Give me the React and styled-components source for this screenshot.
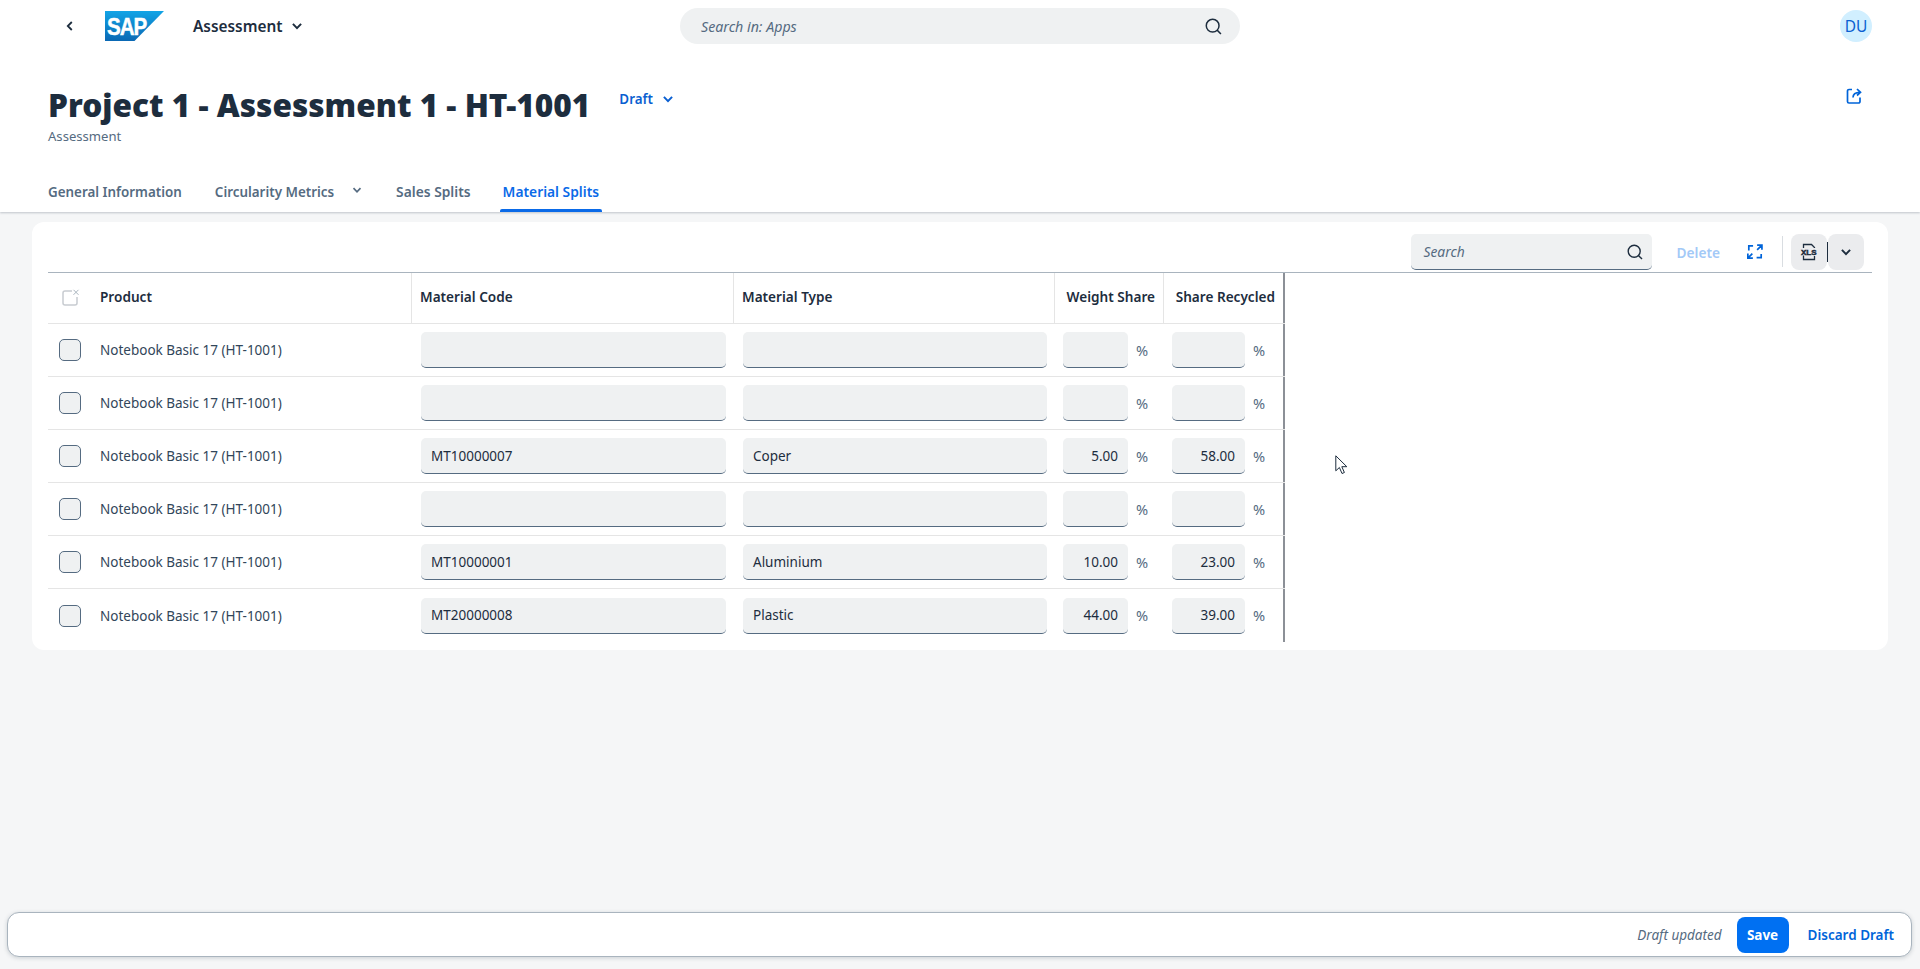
import React from "react";
import styled, { createGlobalStyle } from "styled-components";

const Global = createGlobalStyle`
  html, body { margin: 0; padding: 0; background: #f5f6f7; }
  body { font-family: "Noto Sans", "Open Sans", Arial, sans-serif; color: #1d2d3e; }
  * { box-sizing: border-box; }
`;

const Page = styled.div`
  position: relative;
  height: 969px;
  overflow: hidden;
  display: flex;
  flex-direction: column;
  background: #f5f6f7;
`;

const Header = styled.header`
  height: 212px;
  background: #fff;
  box-shadow: 0 1px 2px rgba(34, 53, 72, 0.25);
  display: flex;
  flex-direction: column;
  flex: none;
`;

const ShellBar = styled.div`
  height: 52px;
  display: grid;
  grid-template-columns: 1fr 560px 1fr;
  align-items: center;
  padding: 0 48px;
`;

const ShellLeft = styled.div`
  display: flex;
  align-items: center;
  padding-left: 16px;
`;

const ShellRight = styled.div`
  display: flex;
  justify-content: flex-end;
`;

const BackButton = styled.span`
  width: 41px;
  display: flex;
  color: #1d2d3e;
`;

const AppTitle = styled.span`
  margin-left: 29px;
  font-size: 15.4px;
  font-weight: 600;
  color: #1d2d3e;
`;

const AppChevron = styled.span`
  display: flex;
  margin-left: 7px;
`;

const ShellSearch = styled.div`
  height: 36px;
  border-radius: 18px;
  background: #eff1f2;
  display: flex;
  align-items: center;
  justify-content: space-between;
  padding: 0 18px 0 21px;
  font-size: 14.2px;
  font-style: italic;
  color: #556b81;
`;

const Avatar = styled.span`
  width: 32px;
  height: 32px;
  border-radius: 50%;
  background: #d1efff;
  color: #0a5fd1;
  font-size: 15.5px;
  display: flex;
  align-items: center;
  justify-content: center;
`;

const TitleArea = styled.div`
  height: 114px;
  padding: 31px 48px 0;
  display: flex;
  justify-content: space-between;
  align-items: flex-start;
`;

const TitleColumn = styled.div`
  display: flex;
  flex-direction: column;
`;

const TitleRow = styled.div`
  display: flex;
  align-items: flex-start;
`;

const Title = styled.h1`
  margin: 0;
  font-size: 31.6px;
  line-height: 44px;
  font-weight: 900;
  color: #1d2d3e;
  white-space: nowrap;
`;

const Status = styled.span`
  margin: 7px 0 0 29px;
  font-size: 13.4px;
  font-weight: 600;
  color: #0a5fd1;
  display: flex;
  align-items: center;
  gap: 8px;
`;

const Subtitle = styled.div`
  margin-top: 0;
  font-size: 13.1px;
  color: #556b81;
`;

const ShareButton = styled.span`
  margin-top: 5px;
  margin-right: 10px;
  display: flex;
`;

const Tabs = styled.nav`
  height: 46px;
  padding: 0 0 0 48px;
  display: flex;
  align-items: stretch;
`;

const Tab = styled.span`
  position: relative;
  display: flex;
  align-items: center;
  padding-top: 5px;
  margin-right: ${(p) => p.$gap}px;
  font-size: ${(p) => p.$size ?? 13.4}px;
  font-weight: 600;
  color: ${(p) => (p.$active ? "#0a6ae8" : "#556b81")};
  ${(p) =>
    p.$active &&
    `&::after { content: ""; position: absolute; left: -3px; right: -3px; bottom: 0; height: 3px; background: #0a6ae8; border-radius: 2px 2px 0 0; }`}
`;

const TabChevron = styled.span`
  display: flex;
  margin: -4px 0 0 17px;
`;

const Card = styled.section`
  margin: 10px 32px 0;
  height: 428px;
  background: #fff;
  border-radius: 12px;
  padding: 12px 16px 0;
  display: flex;
  flex-direction: column;
`;

const Toolbar = styled.div`
  height: 39px;
  display: flex;
  align-items: flex-start;
  justify-content: flex-end;
  padding-right: 8px;
  border-bottom: 1px solid #a9b4be;
`;

const TableSearch = styled.div`
  width: 241px;
  height: 36px;
  background: #eff1f2;
  border-radius: 5px;
  border-bottom: 1px solid #556b81;
  padding: 0 9px 0 13px;
  display: flex;
  align-items: center;
  justify-content: space-between;
  font-size: 13.8px;
  font-style: italic;
  color: #556b81;
`;

const DeleteLabel = styled.span`
  margin-left: 25px;
  height: 36px;
  display: flex;
  align-items: center;
  font-size: 13.7px;
  font-weight: 600;
  color: #a3c9f7;
`;

const ExpandIcon = styled.span`
  margin-left: 27px;
  height: 36px;
  display: flex;
  align-items: center;
`;

const Separator = styled.span`
  width: 1px;
  height: 31px;
  margin: 2px 8px 0 19px;
  background: #d9dde1;
`;

const ExportButton = styled.span`
  width: 36px;
  height: 36px;
  border-radius: 8px;
  background: #ebecee;
  display: flex;
  align-items: center;
  justify-content: center;
`;

const ExportDivider = styled.span`
  width: 1px;
  height: 20px;
  margin-top: 8px;
  background: #1d2d3e;
`;

const Grid = styled.div`
  display: grid;
  grid-template-columns: 44px 320px 322px 321px 109px 121px;
  width: 1237px;
  border-right: 2px solid #8c9097;
`;

const HeadCell = styled.div`
  height: 51px;
  display: flex;
  align-items: center;
  justify-content: ${(p) => (p.$end ? "flex-end" : "flex-start")};
  padding: ${(p) => (p.$end ? `0 ${p.$pr}px 4px 0` : "0 0 4px 8px")};
  font-size: 13.6px;
  font-weight: 600;
  color: #1d2d3e;
  white-space: nowrap;
  border-bottom: 1px solid #e5e5e5;
  border-right: ${(p) => (p.$last || p.$plain ? "none" : "1px solid #e5e5e5")};
`;

const SelectHead = styled(HeadCell)`
  padding: 0 0 2px 14px;
`;

const BodyCell = styled.div`
  height: 53px;
  display: flex;
  align-items: center;
  padding-left: ${(p) => p.$pad ?? 9}px;
  gap: 8px;
  font-size: 13.5px;
  color: #32465a;
  white-space: nowrap;
  border-bottom: ${(p) => (p.$lastRow ? "none" : "1px solid #e5e5e5")};
`;

const Check = styled.span`
  width: 22px;
  height: 22px;
  border-radius: 5px;
  border: 1px solid #556b81;
  background: #eff1f2;
`;

const Field = styled.span`
  width: ${(p) => p.$w}px;
  height: 36px;
  padding: 0 10px;
  background: #eff1f2;
  border-radius: 5px;
  border-bottom: 1px solid #556b81;
  display: flex;
  align-items: center;
  justify-content: ${(p) => (p.$right ? "flex-end" : "flex-start")};
  font-size: 13.5px;
  color: #1d2d3e;
`;

const Unit = styled.span`
  font-size: 14.6px;
  color: #556b81;
  margin-top: -1px;
`;

const FooterBar = styled.footer`
  position: absolute;
  left: 7px;
  right: 8px;
  top: 912px;
  height: 45px;
  background: #fff;
  border: 1px solid #a9b4be;
  border-radius: 12px;
  box-shadow: 0 1px 4px rgba(34, 53, 72, 0.2);
  display: flex;
  align-items: center;
  justify-content: flex-end;
  padding-right: 17px;
`;

const DraftNote = styled.span`
  font-size: 13.5px;
  font-style: italic;
  color: #556b81;
`;

const SaveButton = styled.span`
  margin-left: 15px;
  width: 52px;
  height: 36px;
  border-radius: 8px;
  background: #0070f2;
  color: #fff;
  font-size: 13.5px;
  font-weight: 700;
  display: flex;
  align-items: center;
  justify-content: center;
`;

const DiscardButton = styled.span`
  margin-left: 19px;
  font-size: 13.5px;
  font-weight: 600;
  color: #0064d9;
`;

const Pointer = styled.svg`
  position: absolute;
  left: 1335px;
  top: 455px;
`;

const Chevron = ({ size = 12, color = "#1d2d3e", sw = 1.7 }) => (
  <svg width={size} height={size} viewBox="0 0 12 12" fill="none" stroke={color} strokeWidth={sw}>
    <path d="M2.5 4.2 6 7.8l3.5-3.6" />
  </svg>
);

const SearchGlyph = ({ size = 16 }) => (
  <svg width={size} height={size} viewBox="0 0 16 16" fill="none" stroke="#1d2d3e" strokeWidth="1.4">
    <circle cx="7.2" cy="7.2" r="6" />
    <path d="M11.4 11.4 15 15" />
  </svg>
);

const SapLogo = () => (
  <svg width="59" height="30" viewBox="0 0 59 30">
    <defs>
      <linearGradient id="sapg" x1="0" y1="0" x2="0" y2="1">
        <stop offset="0" stopColor="#12a4e6" />
        <stop offset="1" stopColor="#0a68b4" />
      </linearGradient>
    </defs>
    <path d="M0 0h59L29.5 30H0z" fill="url(#sapg)" />
    <text
      transform="translate(2 24) scale(1.03 1.2)"
      fontFamily="Liberation Sans, Arial, sans-serif"
      fontWeight="700"
      fontSize="20"
      letterSpacing="-1"
      fill="#fff"
      stroke="#fff"
      strokeWidth="0.4"
    >
      SAP
    </text>
  </svg>
);

const ShareGlyph = () => (
  <svg width="16" height="16" viewBox="0 0 16 16" fill="none" stroke="#0064d9" strokeWidth="1.7">
    <path d="M6 1.5H3A1.5 1.5 0 0 0 1.500 3v10.500A1.500 1.500 0 0 0 3 15h9.500a1.500 1.500 0 0 0 1.500-1.500V9.500" />
    <path d="M7 9.500c0-3.200 2-5.200 7-5.200M11 1l3.500 3.300L11 7.500" />
  </svg>
);

const ExpandGlyph = () => (
  <svg width="16" height="16" viewBox="0 0 15 15" fill="none" stroke="#0064d9" strokeWidth="1.6">
    <path d="M1.700 6V1.700h4M9.500 1H14v4.500M14 1 9.500 5.500M.800 9v4.300H5.500M.800 13.300 5 9M13.300 9.300v3.400H9" />
  </svg>
);

const XlsGlyph = () => (
  <svg width="18" height="18" viewBox="0 0 18 18" fill="none" stroke="#1d2d3e" strokeWidth="1.3">
    <path d="M3.500 5V1.500h8l3 3V5M3.500 12.500v4h11v-3.500" />
    <text
      x="1"
      y="11.500"
      stroke="#1d2d3e"
      strokeWidth="0.5"
      fill="#1d2d3e"
      fontFamily="Liberation Sans, Arial, sans-serif"
      fontWeight="700"
      fontSize="8"
    >
      XLS
    </text>
  </svg>
);

const SelectAllGlyph = () => (
  <svg width="18" height="17" viewBox="0 0 18 17" fill="none" stroke="#c8ccd1" strokeWidth="1.500">
    <path d="M10 2H3a2 2 0 0 0-2 2v10a2 2 0 0 0 2 2h10a2 2 0 0 0 2-2V8" />
    <path d="M11.500.800l5 5M16.500.800l-5 5" stroke="#a9b4be" strokeWidth="1" />
  </svg>
);

const rows = [
  { code: "", type: "", weight: "", recycled: "" },
  { code: "", type: "", weight: "", recycled: "" },
  { code: "MT10000007", type: "Coper", weight: "5.00", recycled: "58.00" },
  { code: "", type: "", weight: "", recycled: "" },
  { code: "MT10000001", type: "Aluminium", weight: "10.00", recycled: "23.00" },
  { code: "MT20000008", type: "Plastic", weight: "44.00", recycled: "39.00" },
];

export default function App() {
  return (
    <Page>
      <Global />
      <Header>
        <ShellBar>
          <ShellLeft>
            <BackButton>
              <svg width="12" height="12" viewBox="0 0 12 12" fill="none" stroke="#1d2d3e" strokeWidth="1.800">
                <path d="M7.800 2 3.800 6l4 4" />
              </svg>
            </BackButton>
            <SapLogo />
            <AppTitle>Assessment</AppTitle>
            <AppChevron>
              <Chevron size={14} />
            </AppChevron>
          </ShellLeft>
          <ShellSearch>
            Search in: Apps
            <SearchGlyph size={17} />
          </ShellSearch>
          <ShellRight>
            <Avatar>DU</Avatar>
          </ShellRight>
        </ShellBar>
        <TitleArea>
          <TitleColumn>
            <TitleRow>
              <Title>Project 1 - Assessment 1 - HT-1001</Title>
              <Status>
                Draft
                <Chevron size={14} color="#0a5fd1" />
              </Status>
            </TitleRow>
            <Subtitle>Assessment</Subtitle>
          </TitleColumn>
          <ShareButton>
            <ShareGlyph />
          </ShareButton>
        </TitleArea>
        <Tabs>
          <Tab $gap={33}>General Information</Tab>
          <Tab $gap={33}>
            Circularity Metrics
            <TabChevron>
              <Chevron size={12} color="#556b81" />
            </TabChevron>
          </Tab>
          <Tab $gap={32} $size={13.8}>Sales Splits</Tab>
          <Tab $active $gap={0} $size={13.8}>Material Splits</Tab>
        </Tabs>
      </Header>

      <Card>
        <Toolbar>
          <TableSearch>
            Search
            <SearchGlyph size={16} />
          </TableSearch>
          <DeleteLabel>Delete</DeleteLabel>
          <ExpandIcon>
            <ExpandGlyph />
          </ExpandIcon>
          <Separator />
          <ExportButton>
            <XlsGlyph />
          </ExportButton>
          <ExportDivider />
          <ExportButton>
            <Chevron size={14} />
          </ExportButton>
        </Toolbar>
        <Grid>
          <SelectHead $plain>
            <SelectAllGlyph />
          </SelectHead>
          <HeadCell>Product</HeadCell>
          <HeadCell>Material Code</HeadCell>
          <HeadCell>Material Type</HeadCell>
          <HeadCell $end $pr={8}>Weight Share</HeadCell>
          <HeadCell $end $last $pr={10}>Share Recycled</HeadCell>
          {rows.map((r, i) => {
            const lastRow = i === rows.length - 1;
            return (
              <React.Fragment key={i}>
                <BodyCell $pad={11} $lastRow={lastRow}>
                  <Check />
                </BodyCell>
                <BodyCell $pad={8} $lastRow={lastRow}>Notebook Basic 17 (HT-1001)</BodyCell>
                <BodyCell $lastRow={lastRow}>
                  <Field $w={305}>{r.code}</Field>
                </BodyCell>
                <BodyCell $lastRow={lastRow}>
                  <Field $w={304}>{r.type}</Field>
                </BodyCell>
                <BodyCell $pad={8} $lastRow={lastRow}>
                  <Field $w={65} $right>{r.weight}</Field>
                  <Unit>%</Unit>
                </BodyCell>
                <BodyCell $pad={8} $lastRow={lastRow}>
                  <Field $w={73} $right>{r.recycled}</Field>
                  <Unit>%</Unit>
                </BodyCell>
              </React.Fragment>
            );
          })}
        </Grid>
      </Card>

      <FooterBar>
        <DraftNote>Draft updated</DraftNote>
        <SaveButton>Save</SaveButton>
        <DiscardButton>Discard Draft</DiscardButton>
      </FooterBar>

      <Pointer width="13" height="20" viewBox="0 0 13 20" fill="#fff" stroke="#1d2d3e" strokeWidth="1">
        <path d="M.800.800v15l3.600-3.300 2.600 6 2.400-1-2.600-5.800h5z" />
      </Pointer>
    </Page>
  );
}
